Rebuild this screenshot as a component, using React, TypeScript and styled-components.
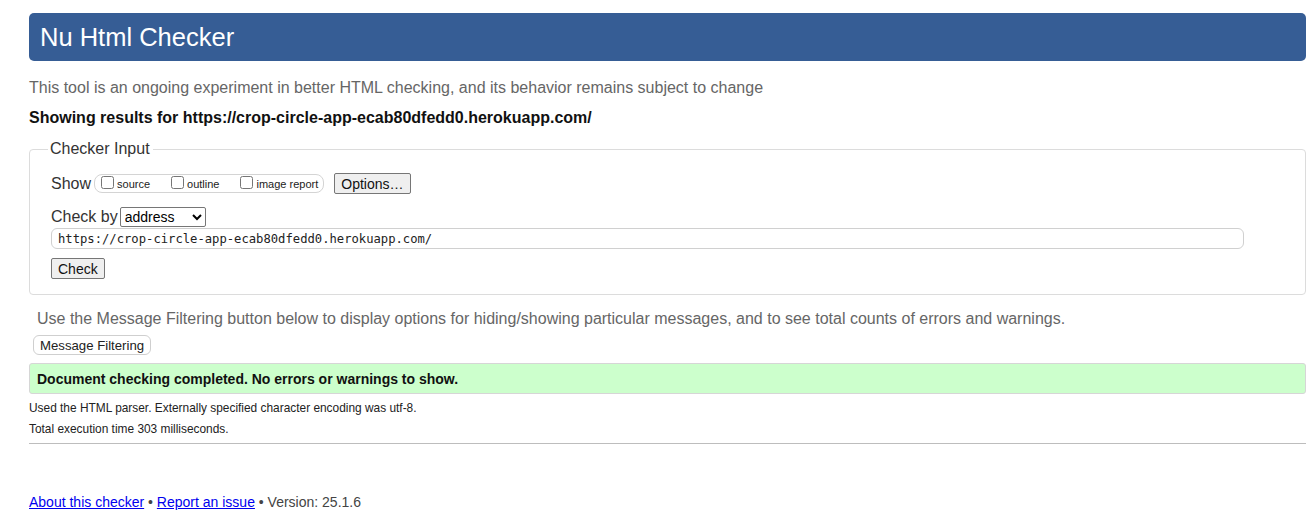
import React from "react";
import styled, { createGlobalStyle } from "styled-components";

const Global = createGlobalStyle`
  html, body { margin: 0; padding: 0; background: #fff; }
  body { font-family: "Liberation Sans", Arial, sans-serif; color: #222; }
`;

const Page = styled.div`
  padding: 13px 10px 0 29px;
  display: flex;
  flex-direction: column;
`;

const Header = styled.h1`
  margin: 0;
  height: 48px;
  box-sizing: border-box;
  background: #365d95;
  border-radius: 5px;
  color: #fff;
  font-weight: normal;
  font-size: 25.5px;
  line-height: 48px;
  padding-left: 11px;
`;

const Lead = styled.p`
  margin: 18px 0 0 0;
  font-size: 16px;
  line-height: 18px;
  color: #666;
`;

const Showing = styled.p`
  margin: 12px 0 0 0;
  font-size: 16px;
  line-height: 18px;
  font-weight: bold;
  color: #111;
`;

const Fieldset = styled.fieldset`
  margin: 13px 0 0 0;
  padding: 15px 20px 15px 21px;
  border: 1px solid #dcdcdc;
  border-radius: 4px;
  min-width: 0;
  display: flex;
  flex-direction: column;
`;

const Legend = styled.legend`
  font-size: 16px;
  color: #333;
  padding: 0 3px 0 2px;
  margin-left: -3px;
`;

const Row = styled.div<{ $mt?: number }>`
  display: flex;
  align-items: center;
  margin-top: ${(p) => p.$mt ?? 0}px;
  font-size: 16px;
  color: #333;
`;

const Pill = styled.span`
  display: inline-flex;
  align-items: center;
  height: 19px;
  box-sizing: border-box;
  border: 1px solid #d4d4d4;
  border-radius: 8px;
  margin-left: 3px;
  padding: 0 5px 0 2px;
`;

const CheckLabel = styled.label<{ $gap?: number }>`
  display: inline-flex;
  align-items: center;
  font-size: 11px;
  color: #222;
  margin-right: ${(p) => p.$gap ?? 0}px;

  input {
    margin: 0 3px 2px 4px;
    width: 13px;
    height: 13px;
  }
`;

const Btn = styled.button<{ $ml?: number }>`
  font-family: "Liberation Sans", Arial, sans-serif;
  font-size: 14px;
  color: #111;
  background: #efefef;
  border: 1px solid #767676;
  border-radius: 2px;
  height: 21px;
  padding: 0 6px;
  margin-left: ${(p) => p.$ml ?? 0}px;
`;

const Select = styled.select`
  font-family: "Liberation Sans", Arial, sans-serif;
  font-size: 14px;
  height: 20px;
  width: 86px;
  margin-left: 2px;
  color: #000;
  border: 1px solid #767676;
  border-radius: 2px;
  background: #fff;
`;

const UrlInput = styled.div`
  margin-top: 1px;
  margin-right: 41px;
  height: 21px;
  box-sizing: border-box;
  border: 1px solid #d0d0d0;
  border-radius: 6px;
  padding: 0 6px;
  display: flex;
  align-items: center;
  font-family: "DejaVu Sans Mono", "Liberation Mono", monospace;
  font-size: 12.2px;
  color: #222;
`;

const CheckBtnRow = styled.div`
  margin-top: 9px;
  display: flex;
`;

const Note = styled.p`
  margin: 15px 0 0 8px;
  font-size: 16px;
  line-height: 18px;
  color: #666;
`;

const FilterBtn = styled.button`
  align-self: flex-start;
  margin: 7px 0 0 4px;
  font-family: "Liberation Sans", Arial, sans-serif;
  font-size: 13.2px;
  color: #222;
  background: #fff;
  border: 1px solid #cfcfcf;
  border-radius: 6px;
  height: 20px;
  padding: 0 6px;
`;

const Success = styled.div`
  margin-top: 8px;
  height: 31px;
  box-sizing: border-box;
  background: #ccffcc;
  border: 1px solid #d6d6d6;
  border-radius: 3px;
  padding-left: 7px;
  display: flex;
  align-items: center;
  font-size: 14px;
  font-weight: bold;
  color: #111;
`;

const Small = styled.p<{ $mt: number }>`
  margin: ${(p) => p.$mt}px 0 0 0;
  font-size: 11.9px;
  line-height: 14px;
  color: #222;
`;

const Rule = styled.hr`
  margin: 7px 0 0 0;
  border: 0;
  border-top: 1px solid #bdbdbd;
  height: 0;
`;

const Footer = styled.p`
  margin: 50px 0 0 0;
  font-size: 14px;
  line-height: 16px;
  color: #444;

  a { color: #0000ee; text-decoration: underline; }
`;

export default function App() {
  return (
    <>
      <Global />
      <Page>
        <Header>Nu Html Checker</Header>
        <Lead>This tool is an ongoing experiment in better HTML checking, and its behavior remains subject to change</Lead>
        <Showing>Showing results for https://crop-circle-app-ecab80dfedd0.herokuapp.com/</Showing>
        <Fieldset>
          <Legend>Checker Input</Legend>
          <Row>
            Show
            <Pill>
              <CheckLabel $gap={17}><input type="checkbox" />source</CheckLabel>
              <CheckLabel $gap={17}><input type="checkbox" />outline</CheckLabel>
              <CheckLabel><input type="checkbox" />image report</CheckLabel>
            </Pill>
            <Btn $ml={10}>Options…</Btn>
          </Row>
          <Row $mt={13}>
            Check by
            <Select defaultValue="address">
              <option value="address">address</option>
              <option value="file">file upload</option>
              <option value="text">text input</option>
            </Select>
          </Row>
          <UrlInput>https://crop-circle-app-ecab80dfedd0.herokuapp.com/</UrlInput>
          <CheckBtnRow>
            <Btn>Check</Btn>
          </CheckBtnRow>
        </Fieldset>
        <Note>Use the Message Filtering button below to display options for hiding/showing particular messages, and to see total counts of errors and warnings.</Note>
        <FilterBtn>Message Filtering</FilterBtn>
        <Success>Document checking completed. No errors or warnings to show.</Success>
        <Small $mt={7}>Used the HTML parser. Externally specified character encoding was utf-8.</Small>
        <Small $mt={7}>Total execution time 303 milliseconds.</Small>
        <Rule />
        <Footer>
          <a href="#">About this checker</a> • <a href="#">Report an issue</a> • Version: 25.1.6
        </Footer>
      </Page>
    </>
  );
}
